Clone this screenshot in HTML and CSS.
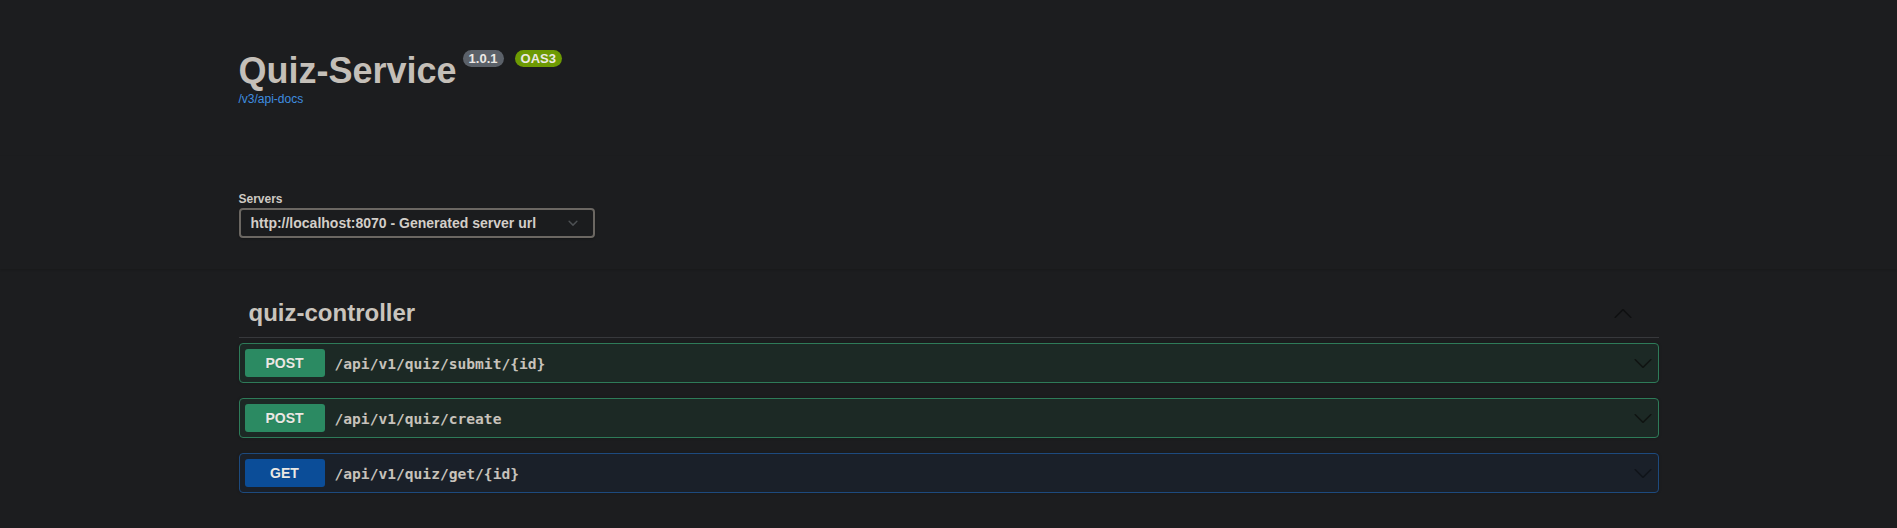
FILE: index.html
```html
<!DOCTYPE html>
<html lang="en">
<head>
<meta charset="utf-8">
<title>Quiz-Service</title>
<link rel="stylesheet" href="styles.css">
</head>
<body>
<div class="swagger-ui">
  <section class="wrapper info-wrap">
    <div class="info">
      <div class="main">
        <h2 class="title">Quiz-Service<span class="badges"><small class="badge version">1.0.1</small><small class="badge stamp">OAS3</small></span></h2>
        <a class="link" href="#">/v3/api-docs</a>
      </div>
    </div>
  </section>

  <section class="scheme-container">
    <div class="wrapper">
      <div class="servers">
        <span class="servers-title">Servers</span>
        <div class="select">
          <span class="select-text">http://localhost:8070 - Generated server url</span>
          <svg class="select-arrow" viewBox="0 0 20 20" width="20" height="20"><path d="M13.418 7.859a.695.695 0 01.978 0 .68.68 0 010 .969l-3.908 3.83a.697.697 0 01-.979 0l-3.908-3.83a.68.68 0 010-.969.695.695 0 01.978 0L10 11l3.418-3.141z"/></svg>
        </div>
      </div>
    </div>
  </section>

  <section class="wrapper ops">
    <h3 class="opblock-tag">
      <span class="tag-name">quiz-controller</span>
      <span class="expand"><svg viewBox="0 0 20 20" width="20" height="20"><path d="M17.418 14.908c.272.268.709.268.979 0s.271-.701 0-.969l-7.908-7.83c-.27-.268-.707-.268-.979 0l-7.908 7.83c-.27.268-.27.701 0 .969.271.268.709.268.979 0L10 7.767l7.418 7.141z"/></svg></span>
    </h3>

    <div class="opblock post">
      <div class="summary">
        <span class="method">POST</span>
        <span class="path">/api/v1/quiz/submit/{id}</span>
        <svg class="arrow" viewBox="0 0 20 20" width="20" height="20"><path d="M17.418 6.109c.272-.268.709-.268.979 0s.271.701 0 .969l-7.908 7.83c-.27.268-.707.268-.979 0l-7.908-7.83c-.27-.268-.27-.701 0-.969.271-.268.709-.268.979 0L10 13.25l7.418-7.141z"/></svg>
      </div>
    </div>

    <div class="opblock post">
      <div class="summary">
        <span class="method">POST</span>
        <span class="path">/api/v1/quiz/create</span>
        <svg class="arrow" viewBox="0 0 20 20" width="20" height="20"><path d="M17.418 6.109c.272-.268.709-.268.979 0s.271.701 0 .969l-7.908 7.83c-.27.268-.707.268-.979 0l-7.908-7.83c-.27-.268-.27-.701 0-.969.271-.268.709-.268.979 0L10 13.25l7.418-7.141z"/></svg>
      </div>
    </div>

    <div class="opblock get">
      <div class="summary">
        <span class="method">GET</span>
        <span class="path">/api/v1/quiz/get/{id}</span>
        <svg class="arrow" viewBox="0 0 20 20" width="20" height="20"><path d="M17.418 6.109c.272-.268.709-.268.979 0s.271.701 0 .969l-7.908 7.83c-.27.268-.707.268-.979 0l-7.908-7.83c-.27-.268-.27-.701 0-.969.271-.268.709-.268.979 0L10 13.25l7.418-7.141z"/></svg>
      </div>
    </div>
  </section>
</div>
</body>
</html>
```

FILE: styles.css
```css
html, body {
  margin: 0;
  padding: 0;
}

body {
  background: #1c1d1f;
  color: #c8c3bc;
  font-family: "Liberation Sans", Arial, sans-serif;
}

.wrapper {
  box-sizing: border-box;
  max-width: 1460px;
  margin: 0 auto;
  padding: 0 20px;
}

.info {
  margin: 50px 0;
}

.title {
  margin: 0;
  font-size: 36px;
  font-weight: 700;
  line-height: normal;
  color: #c4bfb8;
  display: flex;
  align-items: flex-start;
}

.badges {
  display: flex;
  gap: 11px;
  margin-left: 6px;
}

.badge {
  display: block;
  font-size: 13px;
  font-weight: 700;
  line-height: 15px;
  padding: 1px 6px;
  border-radius: 57px;
  color: #ece9e5;
}

.badge.version {
  background: #5b6169;
}

.badge.stamp {
  background: #6d9a03;
}

.link {
  display: block;
  font-size: 12px;
  color: #3f8ee0;
  text-decoration: none;
}

.scheme-container {
  padding: 36px 0 31px;
  margin: 0 0 20px;
  box-shadow: 0 1px 2px 0 rgba(0, 0, 0, 0.15);
}

.servers {
  display: flex;
  flex-direction: column;
  align-items: flex-start;
}

.servers-title {
  font-size: 12px;
  font-weight: 700;
  line-height: 14px;
  color: #cfcac3;
  margin-bottom: 2px;
}

.select {
  display: flex;
  align-items: center;
  box-sizing: border-box;
  height: 30px;
  padding: 0 10px;
  border: 2px solid #6b6762;
  border-radius: 4px;
  background: #1b1c1e;
  box-shadow: 0 1px 2px 0 rgba(0, 0, 0, 0.25);
  font-size: 14px;
  font-weight: 700;
  color: #d3cec8;
}

.select-arrow {
  margin-left: 27px;
  fill: #4d5053;
}

.opblock-tag {
  display: flex;
  align-items: center;
  margin: 0 0 5px;
  padding: 10px 20px 10px 10px;
  border-bottom: 1px solid #37393c;
  font-size: 24px;
  font-weight: 700;
  line-height: normal;
  color: #c9c4bd;
}

.tag-name {
  flex: 1;
}

.expand {
  display: flex;
  padding: 1px 6px;
}

.expand svg {
  fill: #0f1011;
}

.opblock {
  border: 1px solid;
  border-radius: 4px;
  margin: 0 0 15px;
  box-shadow: 0 0 3px rgba(0, 0, 0, 0.19);
}

.opblock.post {
  background: #1c2925;
  border-color: #2e7b59;
}

.opblock.get {
  background: #1a2029;
  border-color: #1d4a7e;
}

.summary {
  display: flex;
  align-items: center;
  padding: 5px;
}

.method {
  min-width: 80px;
  padding: 6px 0;
  border-radius: 3px;
  font-size: 14px;
  font-weight: 700;
  line-height: 16px;
  text-align: center;
  color: #ebe8e4;
  text-shadow: 0 1px 0 rgba(0, 0, 0, 0.1);
}

.post .method {
  background: #2b8a62;
}

.get .method {
  background: #0b4d98;
}

.path {
  flex: 1;
  padding: 0 10px;
  font-family: "DejaVu Sans Mono", "Liberation Mono", monospace;
  font-size: 14.6px;
  font-weight: 700;
  color: #c7c2bb;
}

.arrow {
  fill: #101412;
}

.get .arrow {
  fill: #10141a;
}
```
